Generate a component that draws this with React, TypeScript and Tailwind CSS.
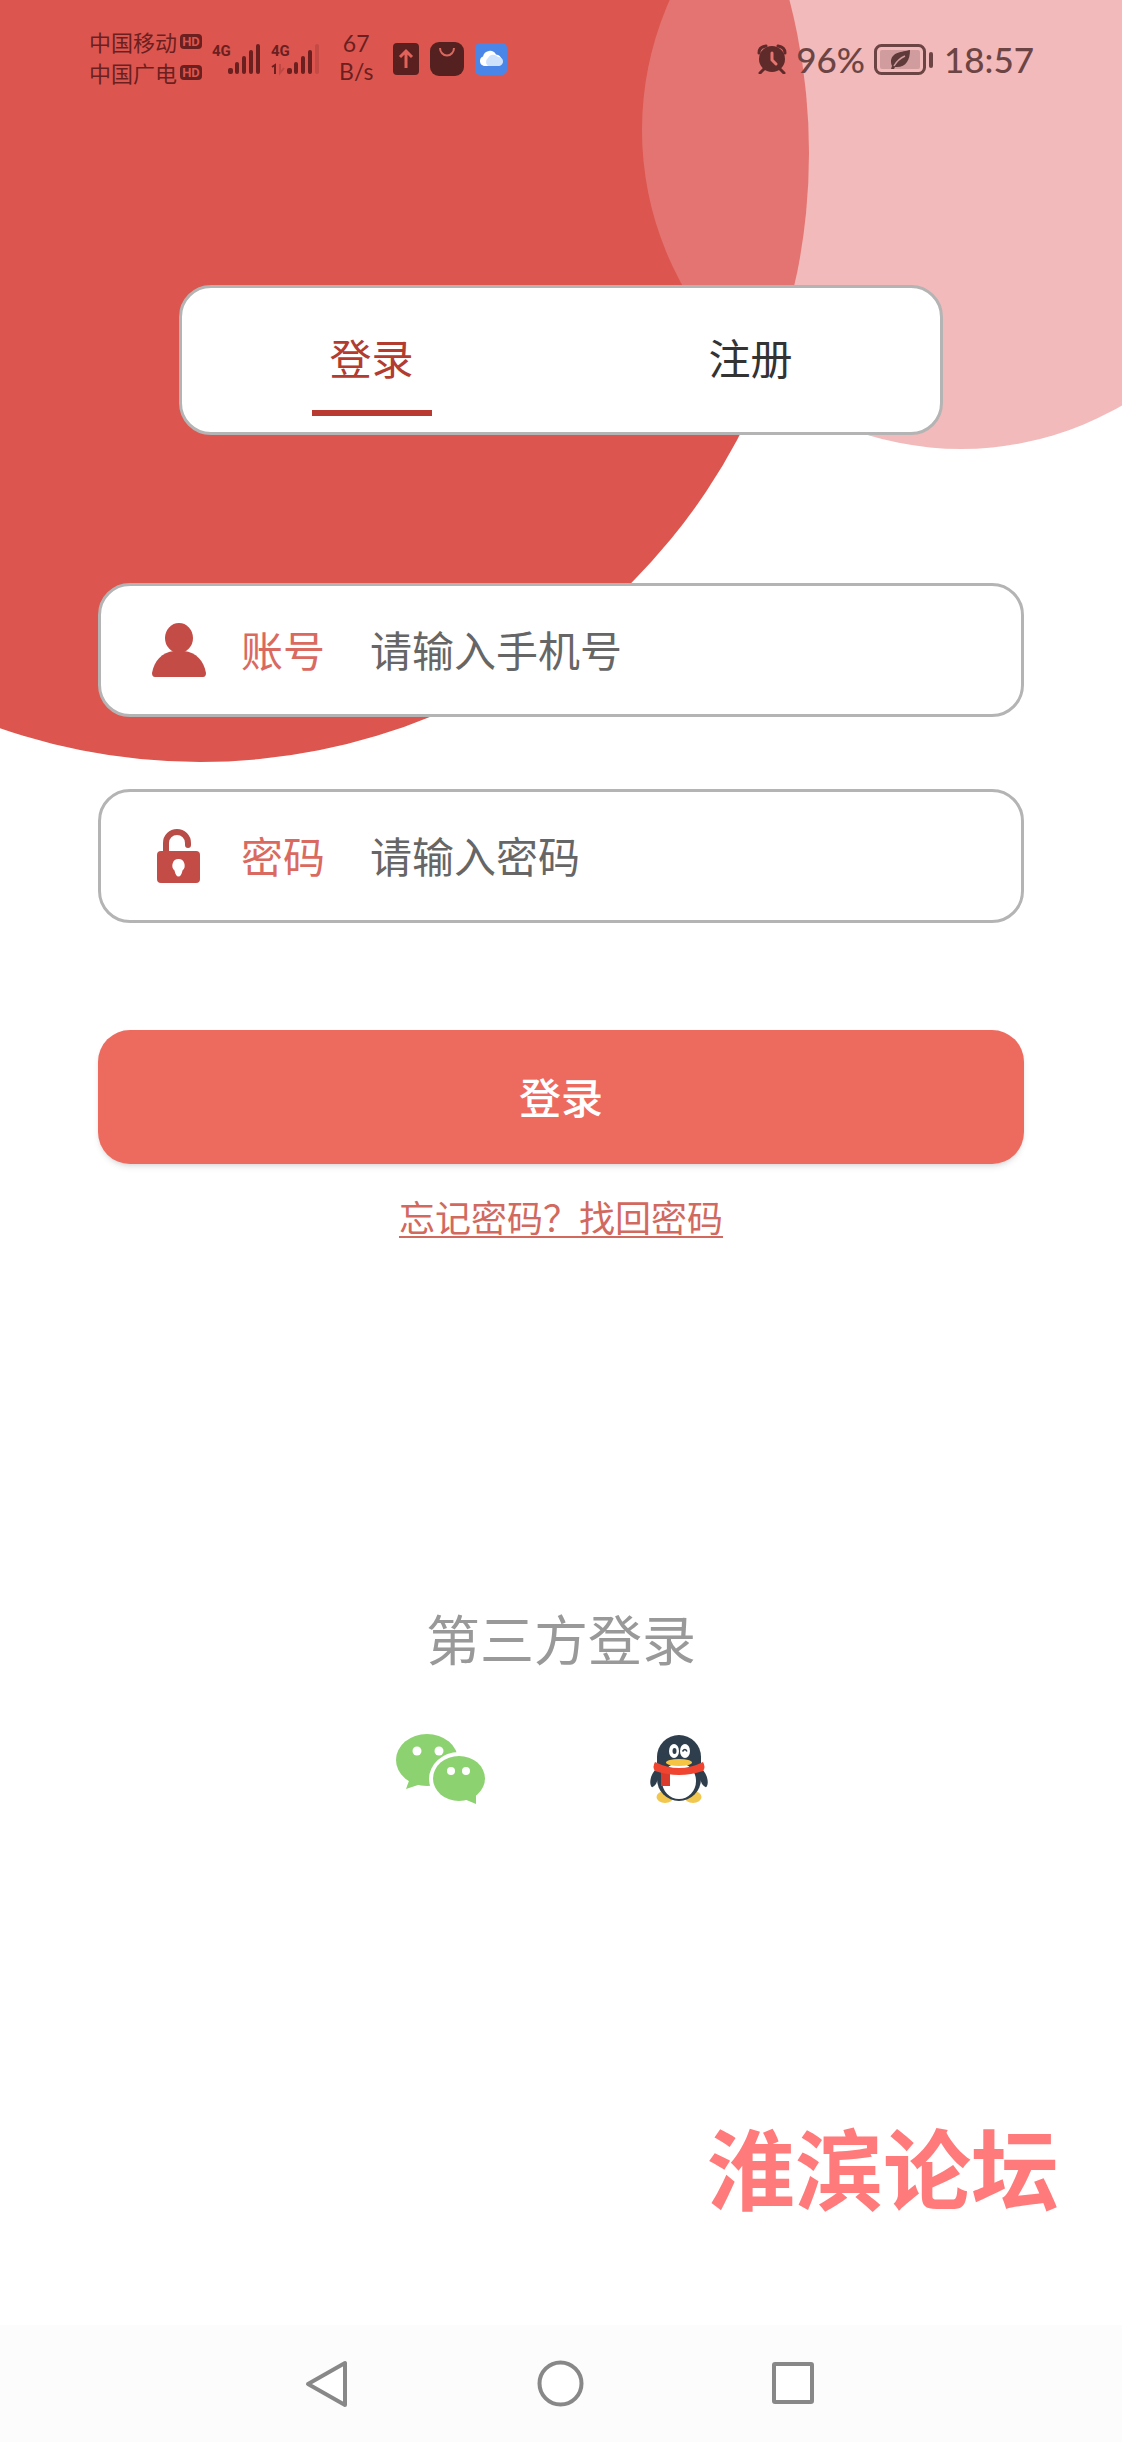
import { useState } from "react";

const SignalIcon = ({ sub = false }) => (
    <svg width="49" height="39" viewBox="0 -4 49 39" fill="#6b1f1f" aria-hidden="true">
        <text x="0" y="12" fontFamily="Roboto, sans-serif" fontWeight="700" fontSize="15">4G</text>
        <rect x="16" y="24" width="5" height="6" rx="2" />
        <rect x="23" y="18" width="4" height="12" rx="2" />
        <rect x="30" y="12" width="4" height="18" rx="2" />
        <rect x="37" y="6" width="4" height="24" rx="2" />
        <rect x="44" y="0" width="4" height="30" rx="2" opacity={sub ? 0.2 : 1} />
        {sub && <path d="M1 23l3-2v9" fill="none" stroke="#6b1f1f" strokeWidth="2" />}
        {sub && <path d="M9 20v9l4-5" fill="none" stroke="#6b1f1f" strokeWidth="2" opacity="0.25" />}
    </svg>
);

const Carrier = ({ name }) => (
    <div className="flex items-center gap-[3px] leading-[31px]">
        <span className="text-[22px]">{name}</span>
        <span className="flex h-[15px] w-[22px] items-center justify-center rounded-[4px] bg-[#6b1f1f] font-[Roboto,sans-serif] text-[13px] font-bold leading-none text-[#dc564f]">
            HD
        </span>
    </div>
);

const StatusBar = () => (
    <header className="flex items-center justify-between pl-[89px] pr-[88px] pt-[26px] text-[#6b1f1f]">
        <div className="flex items-center">
            <div className="pb-1">
                <Carrier name="中国移动" />
                <Carrier name="中国广电" />
            </div>
            <div className="ml-[10px] flex gap-[10px]">
                <SignalIcon />
                <SignalIcon sub />
            </div>
            <div className="ml-[19px] pb-1 text-center font-[Lato,sans-serif] text-[23px] leading-7">
                <p>67</p>
                <p>B/s</p>
            </div>
            <div className="ml-5 flex items-center gap-[11px]">
                <svg width="26" height="32" viewBox="0 0 26 32" aria-hidden="true">
                    <rect width="26" height="32" rx="4" fill="#5a2020" />
                    <path d="M13 25V8M7 14l6-6 6 6" fill="none" stroke="#e2625a" strokeWidth="3" />
                </svg>
                <svg width="34" height="34" viewBox="0 0 34 34" aria-hidden="true">
                    <rect width="34" height="34" rx="9" fill="#552120" />
                    <path d="M10 6a7 7.5 0 0 0 14 0" fill="none" stroke="#d9695f" strokeWidth="2" />
                </svg>
                <svg width="32" height="32" viewBox="0 0 32 32" aria-hidden="true">
                    <rect width="32" height="32" rx="5" fill="#4a86e8" />
                    <path d="M9 23a5 5 0 0 1-1-9.500 7 7 0 0 1 13-2 6 6 0 0 1 2 11.500z" fill="#fff" />
                    <path d="M13 23a5 5 0 0 1 0-8 6 6 0 0 1 10-1 4.500 4.500 0 0 1 1 9z" fill="#cfe2fb" />
                </svg>
            </div>
        </div>

        <div className="flex items-center font-[Lato,sans-serif] text-[35px] font-medium leading-[62px] text-[#6d4444]">
            <svg width="30" height="30" viewBox="0 0 30 30" aria-hidden="true">
                <path d="M7 25l-4 4M23 25l4 4M2 9q0-6 7-7M28 9q0-6-7-7" fill="none" stroke="#5f2a2a" strokeWidth="3" strokeLinecap="round" />
                <circle cx="15" cy="15" r="13" fill="#5f2a2a" />
                <path d="M15 9v7l4 4" fill="none" stroke="#e67570" strokeWidth="3" strokeLinecap="round" />
            </svg>
            <span className="ml-[9px]">96%</span>
            <svg className="ml-[9px]" width="60" height="31" viewBox="0 0 60 31" aria-hidden="true">
                <rect x="1.500" y="1.500" width="49" height="28" rx="6" fill="none" stroke="#6d4444" strokeWidth="3" />
                <rect x="6" y="6" width="40" height="19" rx="2" fill="#d09c9d" />
                <path d="M36 6c-8 2-19 2-19 12q0 2 1 4l-1 3h3l1-2c11 1 15-7 15-17z" fill="#5f3a3a" />
                <path d="M20 22q4-7 11-10" fill="none" stroke="#d09c9d" strokeWidth="1.500" />
                <rect x="55" y="8" width="4" height="16" rx="2" fill="#6d4444" />
            </svg>
            <span className="ml-[10px]">18:57</span>
        </div>
    </header>
);

const UserIcon = () => (
    <svg className="shrink-0" width="54" height="54" viewBox="0 0 54 54" fill="#c44c46" aria-hidden="true">
        <ellipse cx="27" cy="15" rx="14" ry="15" />
        <path d="M22 28h10c12 1 20 10 22 22q0 4-3 4H3q-3 0-3-4c2-12 10-21 22-22z" />
    </svg>
);

const LockIcon = () => (
    <svg className="shrink-0" width="54" height="54" viewBox="0 0 54 54" aria-hidden="true">
        <path d="M14 24V14a11 11 0 0 1 22 0v2" fill="none" stroke="#b84d48" strokeWidth="6" strokeLinecap="round" />
        <rect x="5" y="22" width="43" height="32" rx="4" fill="#c44c46" />
        <path d="M26.500 30a6 6.500 0 0 1 4 11.500c-1 4-2 6-4 6s-3-2-4-6a6 6.500 0 0 1 4-11.500z" fill="#fff" />
    </svg>
);

const WechatIcon = () => (
    <svg width="89" height="70" viewBox="0 0 89 70" fill="#8dd271" aria-hidden="true">
        <ellipse cx="31" cy="26" rx="31" ry="26" />
        <path d="M14 44l-4 11 15-5z" />
        <ellipse cx="63" cy="45" rx="30" ry="27" fill="#fff" />
        <ellipse cx="63" cy="44.500" rx="26" ry="22.500" />
        <path d="M80 58v12l-12-5z" />
        <g fill="#fff">
            <circle cx="21" cy="17" r="4.500" />
            <circle cx="43" cy="17" r="4.500" />
            <circle cx="55" cy="37" r="4" />
            <circle cx="70" cy="37" r="4" />
        </g>
    </svg>
);

const QQIcon = () => (
    <svg width="58" height="68" viewBox="0 0 58 68" aria-hidden="true">
        <ellipse cx="15" cy="62" rx="8.500" ry="6" fill="#f2c750" />
        <ellipse cx="43" cy="62" rx="8.500" ry="6" fill="#f2c750" />
        <path d="M7 33C1 38-1 47 1 51q1 3 5-2l5-12zM51 33c6 5 8 14 6 18q-1 3-5-2l-5-12z" fill="#2f3e4c" />
        <ellipse cx="29" cy="44" rx="22" ry="22" fill="#2f3e4c" />
        <path d="M7 30V22a22 22 0 0 1 44 0v8z" fill="#2f3e4c" />
        <ellipse cx="29" cy="46" rx="17" ry="18" fill="#fff" />
        <path d="M11 36l9 2v13h-9z" fill="#d93a2b" />
        <path d="M5 27q24 12 48 0 3 5 0 9-24 8-48 0-3-4 0-9z" fill="#ee4430" />
        <ellipse cx="29" cy="27.500" rx="13" ry="3.500" fill="#f5c445" />
        <ellipse cx="24" cy="16" rx="5" ry="7" fill="#fff" />
        <ellipse cx="35" cy="16" rx="5" ry="7" fill="#fff" />
        <ellipse cx="24.500" cy="16" rx="2" ry="3" fill="#2f3e4c" />
        <path d="M32.500 16.500q2.500-4 4.500 0" fill="none" stroke="#2f3e4c" strokeWidth="1.500" />
    </svg>
);

const Field = ({ id, type, label, placeholder, icon }) => (
    <div className="flex h-[134px] items-center rounded-[32px] border-[3px] border-[#b4b4b4] bg-white pl-[51px] pr-8 text-[42px]">
        {icon}
        <label htmlFor={id} className="ml-[35px] shrink-0 pb-1 text-[#da6a60]">{label}</label>
        <input
            id={id}
            type={type}
            placeholder={placeholder}
            className="ml-[45px] min-w-0 flex-1 bg-transparent pb-1 text-[#666] outline-none placeholder:text-[#666]"
        />
    </div>
);

const App = () => {
    const [tab, setTab] = useState("login");

    const tabs = [
        { key: "login", label: "登录" },
        { key: "register", label: "注册" },
    ];

    return (
        <div className="relative flex min-h-screen flex-col overflow-hidden bg-white font-['Noto_Sans_CJK_SC',sans-serif]">
            <svg className="absolute inset-x-0 top-0 w-full" viewBox="0 0 1122 780" aria-hidden="true">
                <circle cx="200" cy="153" r="609" fill="#dc564f" />
                <circle cx="961" cy="130" r="319" fill="#e98a8a" fillOpacity="0.59" />
            </svg>

            <div className="relative flex flex-1 flex-col">
                <StatusBar />

                <main className="flex flex-1 flex-col">
                    <div className="mx-[179px] mt-[193px] flex h-[150px] rounded-[32px] border-[3px] border-[#b4b4b4] bg-white">
                        {tabs.map((item) => (
                            <button
                                key={item.key}
                                type="button"
                                onClick={() => setTab(item.key)}
                                className={`relative flex flex-1 items-center justify-center pb-2 text-[42px] ${tab === item.key ? "text-[#b23c30]" : "text-[#333]"}`}
                            >
                                {item.label}
                                {tab === item.key && (
                                    <span className="absolute bottom-4 left-1/2 h-[6px] w-[120px] -translate-x-1/2 bg-[#b93a30]" />
                                )}
                            </button>
                        ))}
                    </div>

                    <form
                        className="mt-[148px] flex flex-col px-[98px]"
                        onSubmit={(e) => e.preventDefault()}
                    >
                        <div className="flex flex-col gap-[72px]">
                            <Field id="phone" type="tel" label="账号" placeholder="请输入手机号" icon={<UserIcon />} />
                            <Field id="password" type="password" label="密码" placeholder="请输入密码" icon={<LockIcon />} />
                        </div>
                        <button
                            type="submit"
                            className="mt-[107px] h-[134px] rounded-[32px] bg-[#ed6a5f] pb-1 text-[42px] font-medium text-white shadow-md"
                        >
                            登录
                        </button>
                        <a
                            href="#"
                            className="mt-7 self-center text-[36px] leading-[48px] text-[#d2695f] underline decoration-2 underline-offset-4"
                        >
                            忘记密码？找回密码
                        </a>
                    </form>

                    <section className="mt-[362px] flex flex-col items-center">
                        <h2 className="text-[54px] leading-[72px] text-[#999]">第三方登录</h2>
                        <div className="mt-[60px] flex gap-[165px] pr-[18px]">
                            <button type="button" aria-label="微信"><WechatIcon /></button>
                            <button type="button" aria-label="QQ"><QQIcon /></button>
                        </div>
                    </section>

                    <p className="mb-28 mt-auto pr-[63px] text-right text-[88px] font-bold leading-[96px] text-[#ff7b7b]">
                        淮滨论坛
                    </p>
                </main>

                <nav className="flex h-[117px] items-center justify-center gap-[186px] bg-[#fcfcfc]">
                    <button type="button" aria-label="返回">
                        <svg width="48" height="48" viewBox="0 0 48 48" fill="#fff" stroke="#888" strokeWidth="4" strokeLinejoin="round">
                            <path d="M5 24L42 3v42z" />
                        </svg>
                    </button>
                    <button type="button" aria-label="主页">
                        <svg width="48" height="48" viewBox="0 0 48 48" fill="#fff" stroke="#888" strokeWidth="4">
                            <circle cx="23.500" cy="23.500" r="21" />
                        </svg>
                    </button>
                    <button type="button" aria-label="最近任务">
                        <svg width="48" height="48" viewBox="0 0 48 48" fill="#fff" stroke="#888" strokeWidth="4" strokeLinejoin="round">
                            <rect x="3" y="4" width="38" height="38" rx="1" />
                        </svg>
                    </button>
                </nav>
            </div>
        </div>
    );
};
export default App;
